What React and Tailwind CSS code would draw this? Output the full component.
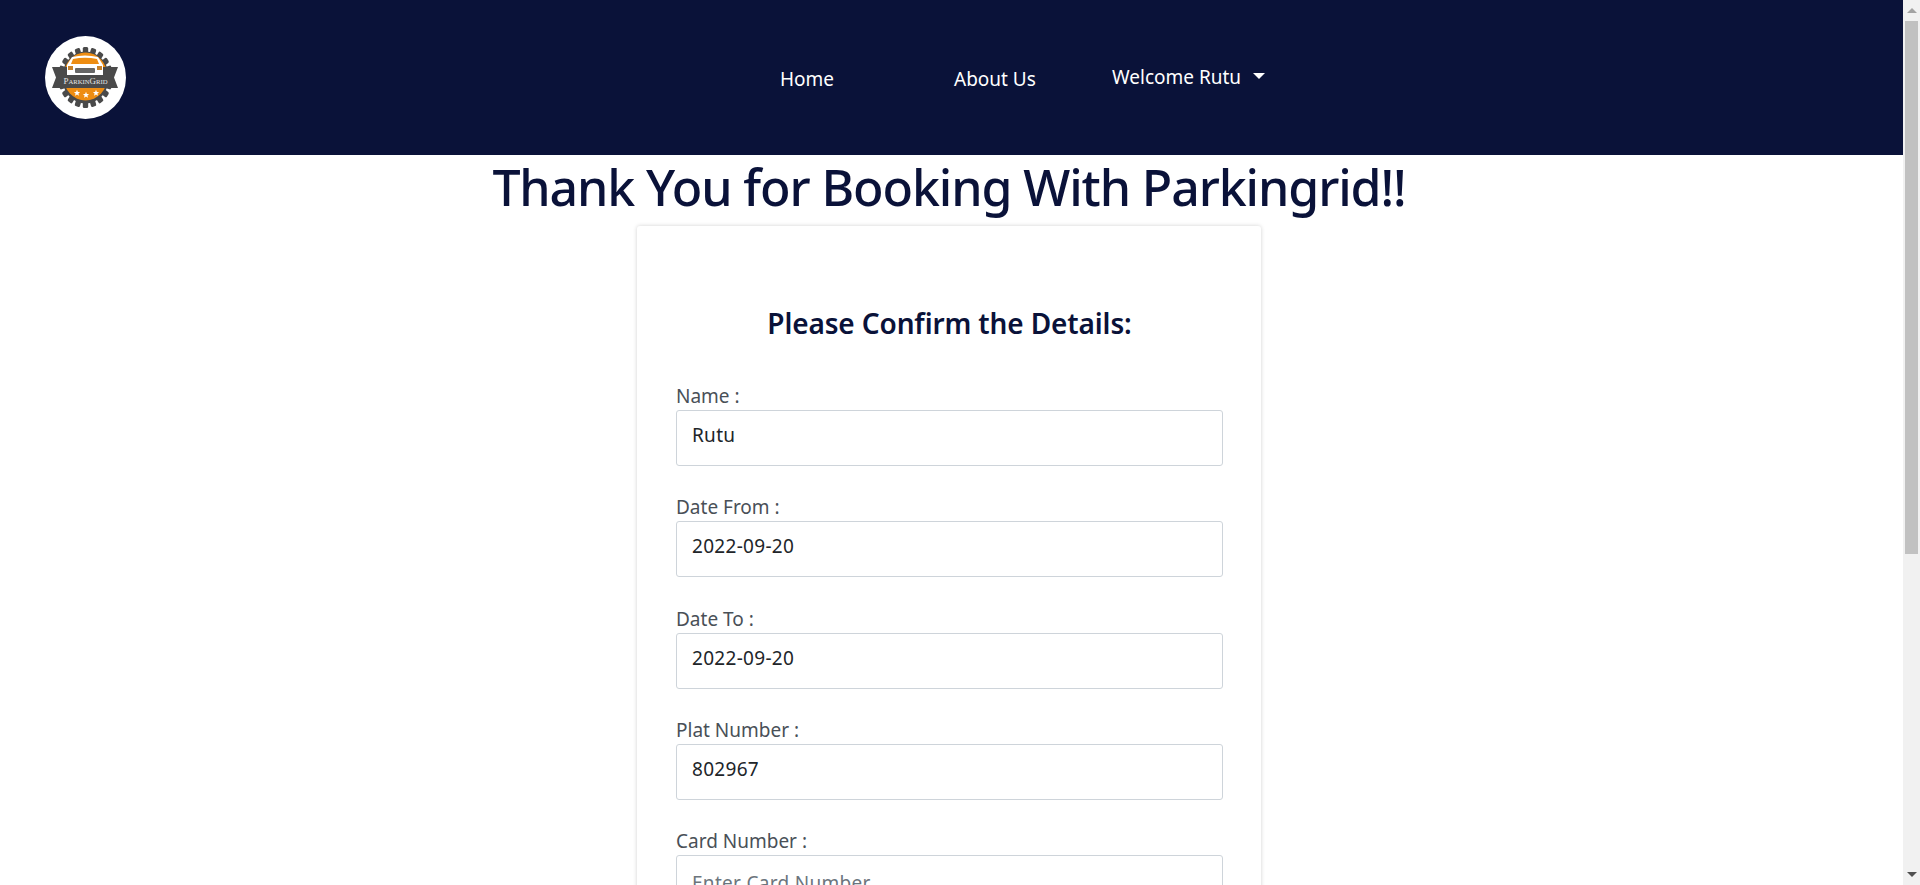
const FONT = "font-['Noto_Sans',sans-serif]";

function Star({ x, y }) {
  return (
    <path
      transform={`translate(${x} ${y})`}
      d="M0 -3.2 L.9 -1 3.1 -1 1.4 .5 2 2.8 0 1.5 -2 2.8 -1.4 .5 -3.1 -1 -.9 -1Z"
      fill="#fff"
    />
  );
}

function Logo() {
  const teeth = [];
  for (let i = 0; i < 20; i++) {
    teeth.push(
      <rect key={i} x="-3" y="-30.5" width="6" height="6" rx="1.5" fill="#4a4a4a" transform={`rotate(${i * 18})`} />
    );
  }
  return (
    <svg width="81" height="84" viewBox="0 0 81 84" className="block">
      <ellipse cx="40.5" cy="42.5" rx="40.5" ry="41.5" fill="#fff" />
      <g transform="translate(40.5 42.5) scale(.9 1)">
        {teeth}
        <circle r="26" fill="#4a4a4a" />
      </g>
      <ellipse cx="40.5" cy="41.5" rx="22" ry="24" fill="#ee8d12" />
      <path d="M7 32 L73 32 L69 42.5 L73 53 L7 53 L11 42.5 Z" fill="#4a4a4a" />
      <path d="M22 30 L27 22 Q40 19 53 22 L58 30 L58 40 L22 40 Z" fill="#fff" />
      <path d="M28 24 Q40 21.5 52 24 L54 29 L26 29 Z" fill="#ee8d12" />
      <rect x="30" y="33" width="20" height="5" rx="1" fill="#666" />
      <rect x="23" y="31" width="5" height="4" fill="#c9822a" />
      <rect x="52" y="31" width="5" height="4" fill="#c9822a" />
      <text
        x="40.5"
        y="48.5"
        textAnchor="middle"
        fontSize="8"
        textLength="44"
        lengthAdjust="spacingAndGlyphs"
        fill="#e4e4e4"
        fontFamily="Liberation Serif, serif"
        style={{ fontVariant: 'small-caps' }}
      >
        ParkinGrid
      </text>
      <Star x={32} y={58} />
      <Star x={41} y={60} />
      <Star x={51} y={58} />
    </svg>
  );
}

function Field({ label, value, placeholder }) {
  return (
    <div className="mb-[28.25px]">
      <label className="block h-[27px] text-[19px] leading-[27px] text-[#495057]">{label}</label>
      <input
        readOnly
        value={value || ''}
        placeholder={placeholder}
        className={`block h-[56px] w-full rounded-[3px] border border-[#ced4da] bg-white px-[15px] text-[19px] text-[#212529] tracking-[0.3px] placeholder:text-[#6c757d] outline-none ${placeholder ? '' : 'pb-[6px]'}`}
      />
    </div>
  );
}

export default function App() {
  return (
    <div className={`flex h-[885px] overflow-hidden bg-white ${FONT}`}>
      <div className="min-w-0 flex-1 overflow-hidden">
        <nav className="flex h-[155px] items-start bg-[#0a1239] text-[19px] leading-[27px] text-white">
          <div className="mt-[35px] ml-[45px] w-[735px]">
            <Logo />
          </div>
          <a className="mt-[66px] w-[174px]">Home</a>
          <a className="mt-[66px] w-[158px]">About Us</a>
          <a className="mt-[64px] flex items-center">
            Welcome Rutu
            <span className="ml-[12px] mb-[3px] h-0 w-0 border-x-[6px] border-t-[6px] border-x-transparent border-t-white" />
          </a>
        </nav>
        <h1 className="h-[71px] pr-[5px] text-center text-[50px] leading-[64px] font-medium text-[#0a1239] tracking-[-1.1px]">
          Thank You for Booking With Parkingrid!!
        </h1>
        <div className="ml-[637px] w-[624px] rounded-[3px] bg-white pt-[74px] pr-[38px] pb-[60px] pl-[39px] shadow-[0_0_4px_rgba(0,0,0,0.18)]">
          <h2 className="mb-[37px] text-center text-[28px] leading-[46px] font-semibold text-[#0a1239] tracking-[-0.13px]">
            Please Confirm the Details:
          </h2>
          <Field label="Name :" value="Rutu" />
          <Field label="Date From :" value="2022-09-20" />
          <Field label="Date To :" value="2022-09-20" />
          <Field label="Plat Number :" value="802967" />
          <Field label="Card Number :" placeholder="Enter Card Number" />
        </div>
      </div>
      <div className="flex w-[17px] shrink-0 flex-col bg-[#f1f1f1]">
        <div className="flex h-[21px] items-center justify-center">
          <span className="h-0 w-0 border-x-[5px] border-b-[5px] border-x-transparent border-b-[#a3a3a3]" />
        </div>
        <div className="mx-[2px] h-[533px] bg-[#c1c1c1]" />
        <div className="flex-1" />
        <div className="flex h-[21px] items-center justify-center">
          <span className="h-0 w-0 border-x-[5px] border-t-[5px] border-x-transparent border-t-[#505050]" />
        </div>
      </div>
    </div>
  );
}
